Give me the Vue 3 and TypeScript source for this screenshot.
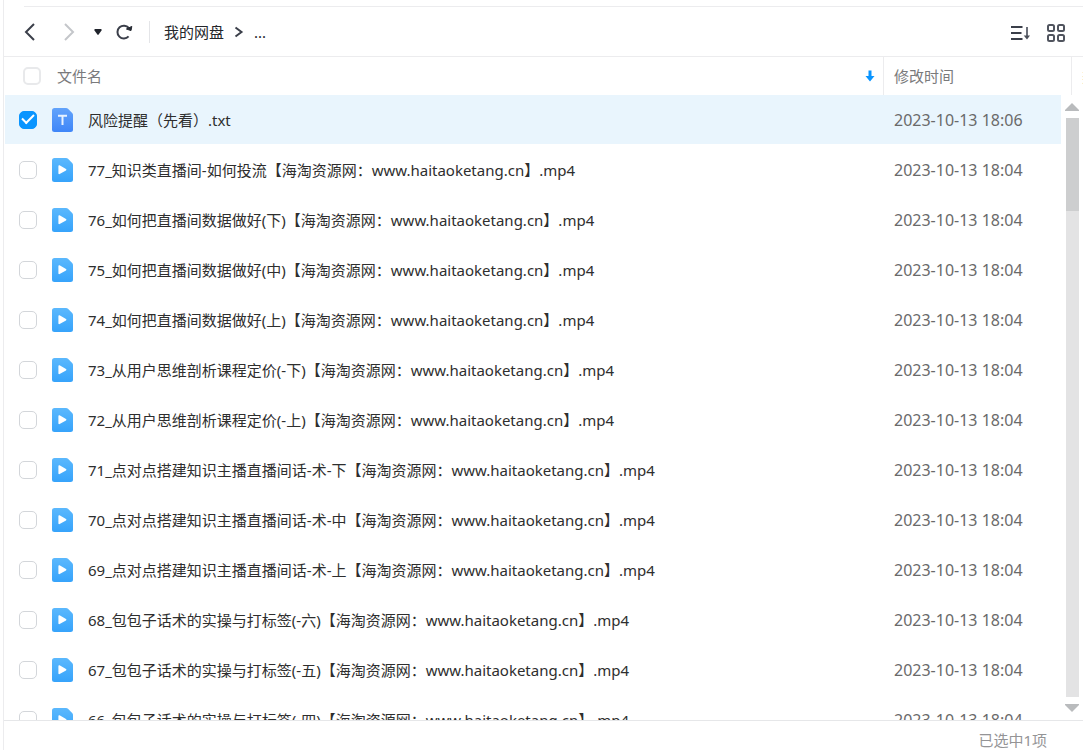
<script setup lang="ts">
import { ref } from 'vue'

interface FileRow {
  name: string
  time: string
  kind: 'text' | 'video'
  checked: boolean
}

const site = '【海淘资源网：www.haitaoketang.cn】.mp4'
const titles: string[] = [
  '77_知识类直播间-如何投流',
  '76_如何把直播间数据做好(下)',
  '75_如何把直播间数据做好(中)',
  '74_如何把直播间数据做好(上)',
  '73_从用户思维剖析课程定价(-下)',
  '72_从用户思维剖析课程定价(-上)',
  '71_点对点搭建知识主播直播间话-术-下',
  '70_点对点搭建知识主播直播间话-术-中',
  '69_点对点搭建知识主播直播间话-术-上',
  '68_包包子话术的实操与打标签(-六)',
  '67_包包子话术的实操与打标签(-五)',
  '66_包包子话术的实操与打标签(-四)',
]

const files = ref<FileRow[]>([
  { name: '风险提醒（先看）.txt', time: '2023-10-13 18:06', kind: 'text', checked: true },
  ...titles.map((t): FileRow => ({
    name: t + site,
    time: '2023-10-13 18:04',
    kind: 'video',
    checked: false,
  })),
])
</script>

<template>
  <main class="drive">
    <header class="toolbar">
      <button class="tool back" type="button" aria-label="后退">
        <svg width="14" height="20" viewBox="0 0 14 20"><path d="M11 2 L3 10 L11 18" fill="none" stroke="#3b3f4a" stroke-width="2" /></svg>
      </button>
      <button class="tool forward" type="button" aria-label="前进">
        <svg width="14" height="20" viewBox="0 0 14 20"><path d="M3 2 L11 10 L3 18" fill="none" stroke="#c4c6ca" stroke-width="2" /></svg>
      </button>
      <button class="tool history" type="button" aria-label="历史">
        <svg width="8" height="8" viewBox="0 0 8 8"><path d="M0.5 1.5 Q0.5 1 1 1 H7 Q7.5 1 7.5 1.5 V2.5 L4.6 6.6 Q4 7.2 3.4 6.6 L0.5 2.5 Z" fill="#20242c" /></svg>
      </button>
      <button class="tool refresh" type="button" aria-label="刷新">
        <svg width="18" height="18" viewBox="0 0 18 18">
          <path d="M13.6 13.4 A6.4 6.4 0 1 1 13.8 5" fill="none" stroke="#3b3f4a" stroke-width="2" />
          <path d="M11.4 6 L16 7.6 L16.8 3.4 Z" fill="#262a33" stroke="#262a33" stroke-width="1" stroke-linejoin="round" />
        </svg>
      </button>
      <nav class="crumbs" aria-label="路径">
        <a href="#">我的网盘</a>
        <svg width="10" height="12" viewBox="0 0 10 12"><path d="M1.5 1.5 L7.5 6 L1.5 10.5" fill="none" stroke="#3b3f4a" stroke-width="2" /></svg>
        <a href="#">...</a>
      </nav>
      <div class="views">
        <button class="tool" type="button" aria-label="排序">
          <svg width="20" height="16" viewBox="0 0 20 16">
            <path d="M1 2 H12.5 M1 8 H11.5 M1 14 H12.5" fill="none" stroke="#3b3f4a" stroke-width="2" />
            <path d="M17 2 V12" fill="none" stroke="#6b6f79" stroke-width="2" />
            <path d="M13.7 10.5 H20 L17 14.5 Z" fill="#4b4f59" />
          </svg>
        </button>
        <button class="tool" type="button" aria-label="网格视图">
          <svg width="18" height="18" viewBox="0 0 18 18" fill="none" stroke="#50545e" stroke-width="2">
            <rect x="1" y="1" width="6" height="6" rx="1.5" />
            <rect x="11" y="1" width="6" height="6" rx="1.5" />
            <rect x="1" y="11" width="6" height="6" rx="1.5" />
            <rect x="11" y="11" width="6" height="6" rx="1.5" />
          </svg>
        </button>
      </div>
    </header>

    <section class="list">
      <table>
        <colgroup>
          <col />
          <col class="col-time" />
          <col class="col-kind" />
        </colgroup>
        <thead>
          <tr>
            <th scope="col">
              <div class="head-name">
                <input type="checkbox" aria-label="全选" />
                <span>文件名</span>
                <svg width="10" height="14" viewBox="0 0 10 14"><path d="M3.5 1.5 H6.5 V7 H9.5 L5 12.5 L0.5 7 H3.5 Z" fill="#0a95ff" /></svg>
              </div>
            </th>
            <th scope="col" class="ruled">修改时间</th>
            <th scope="col" class="ruled">类型</th>
          </tr>
        </thead>
        <tbody>
          <tr v-for="(file, i) in files" :key="file.name" :class="{ selected: file.checked }">
            <td>
              <div class="file">
                <input :id="'file-' + i" v-model="file.checked" type="checkbox" />
                <svg class="file-icon" width="22" height="24" viewBox="0 0 22 24">
                  <defs>
                    <linearGradient id="text-fill" x1="0" y1="0" x2="0" y2="1"><stop offset="0" stop-color="#62a3fb" /><stop offset="1" stop-color="#3f86f8" /></linearGradient>
                    <linearGradient id="video-fill" x1="0" y1="0" x2="0" y2="1"><stop offset="0" stop-color="#5bb8fd" /><stop offset="1" stop-color="#36a3fb" /></linearGradient>
                  </defs>
                  <path
                    d="M2.5 0 H14 Q15.2 0 16 0.8 L20.2 5 Q21 5.8 21 7 V21.5 Q21 24 18.5 24 H2.5 Q0 24 0 21.5 V2.5 Q0 0 2.5 0 Z"
                    :fill="file.kind === 'text' ? 'url(#text-fill)' : 'url(#video-fill)'"
                  />
                  <path v-if="file.kind === 'text'" d="M6 7.8 H15 M10.5 7.8 V17" fill="none" stroke="#e8f2ff" stroke-width="2" />
                  <path v-else d="M7.2 8 L13.6 11.7 L7.2 15.4 Z" fill="#fff" stroke="#fff" stroke-width="1.6" stroke-linejoin="round" />
                </svg>
                <label :for="'file-' + i">{{ file.name }}</label>
              </div>
            </td>
            <td class="time">{{ file.time }}</td>
            <td></td>
          </tr>
        </tbody>
      </table>
      <div class="scrollbar" aria-hidden="true">
        <svg width="14" height="8" viewBox="0 0 14 8"><path d="M7 0 L14 7 V8 H0 V7 Z" fill="#b9bbbd" /></svg>
        <div class="track"><div class="thumb"></div></div>
        <svg width="14" height="8" viewBox="0 0 14 8"><path d="M7 8 L14 1 V0 H0 V1 Z" fill="#b9bbbd" /></svg>
      </div>
    </section>

    <footer class="status">已选中1项</footer>
  </main>
</template>

<style>
body {
  margin: 0;
  background: #fff;
}
</style>

<style scoped>
.drive {
  box-sizing: border-box;
  height: 100vh;
  margin-left: 3px;
  border-left: 1px solid #ececee;
  display: flex;
  flex-direction: column;
  overflow: hidden;
  font: 15px/20px "Noto Sans", "Noto Sans CJK SC", sans-serif;
  color: #2e2e2e;
}
.drive::before {
  content: "";
  flex: none;
  height: 1px;
  margin: 6px 0 0 20px;
  background: #ececee;
}
.toolbar {
  flex: none;
  height: 49px;
  display: flex;
  align-items: center;
  padding: 0 18px 0 19px;
  border-bottom: 1px solid #ececee;
}
.tool {
  display: flex;
  padding: 0;
  border: 0;
  background: none;
}
.forward {
  margin-left: 25px;
}
.history {
  margin-left: 18px;
}
.refresh {
  margin-left: 13px;
}
.crumbs {
  display: flex;
  align-items: center;
  gap: 10px;
  height: 22px;
  margin-left: 16px;
  padding-left: 14px;
  border-left: 1px solid #e4e5e8;
}
.crumbs a {
  color: #24262b;
  text-decoration: none;
}
.views {
  display: flex;
  align-items: center;
  gap: 17px;
  margin-left: auto;
  padding-top: 3px;
}
.list {
  position: relative;
  flex: 1;
  min-height: 0;
  overflow: hidden;
}
table {
  width: 100%;
  table-layout: fixed;
  border-collapse: separate;
  border-spacing: 0;
}
.col-time {
  width: 188px;
}
.col-kind {
  width: 12px;
}
th,
td {
  box-sizing: border-box;
  padding: 0;
  text-align: left;
  font-weight: 400;
  white-space: nowrap;
  overflow: hidden;
}
th {
  height: 38px;
  color: #7a7a7c;
}
.ruled {
  padding-left: 10px;
  border-left: 1px solid #ececee;
}
.head-name {
  display: flex;
  align-items: center;
  padding: 0 8px 0 19px;
}
.head-name span {
  flex: 1;
  margin-left: 16px;
}
input[type="checkbox"] {
  appearance: none;
  flex: none;
  box-sizing: border-box;
  width: 18px;
  height: 18px;
  margin: 0;
  border: 1px solid #d3d6da;
  border-radius: 5px;
  background: #fff;
}
.head-name input[type="checkbox"] {
  border: 2px solid #e8e9eb;
}
.file input[type="checkbox"]:checked {
  display: grid;
  place-items: center;
  border-color: #0a95ff;
  background: #0a95ff;
}
.file input[type="checkbox"]:checked::before {
  content: "";
  width: 10px;
  height: 5px;
  margin-bottom: 4px;
  border: solid #fff;
  border-width: 0 0 2px 2px;
  transform: rotate(-45deg);
}
td {
  height: 50px;
  border-bottom: 1px solid #fff;
}
.selected td {
  background: #e9f5fd;
}
.selected td:first-child {
  border-left: 1px solid #fff;
}
.file {
  display: flex;
  align-items: center;
  padding-left: 15px;
}
.selected .file {
  padding-left: 14px;
}
.file-icon {
  flex: none;
  margin: 0 14px 0 15px;
}
.time {
  padding-left: 11px;
  font-size: 16px;
  color: #6a6a6a;
}
.scrollbar {
  position: absolute;
  top: 38px;
  right: 0;
  bottom: 0;
  box-sizing: border-box;
  width: 22px;
  padding: 8px 4px;
  display: flex;
  flex-direction: column;
  align-items: center;
  gap: 7px;
  background: #fff;
}
.track {
  flex: 1;
  width: 13px;
  background: #e3e3e4;
}
.thumb {
  height: 16%;
  background: #cdcecf;
}
.status {
  flex: none;
  box-sizing: border-box;
  height: 30px;
  padding: 9px 36px 0 0;
  border-top: 1px solid #e6e7e9;
  text-align: right;
  color: #949496;
}
</style>
